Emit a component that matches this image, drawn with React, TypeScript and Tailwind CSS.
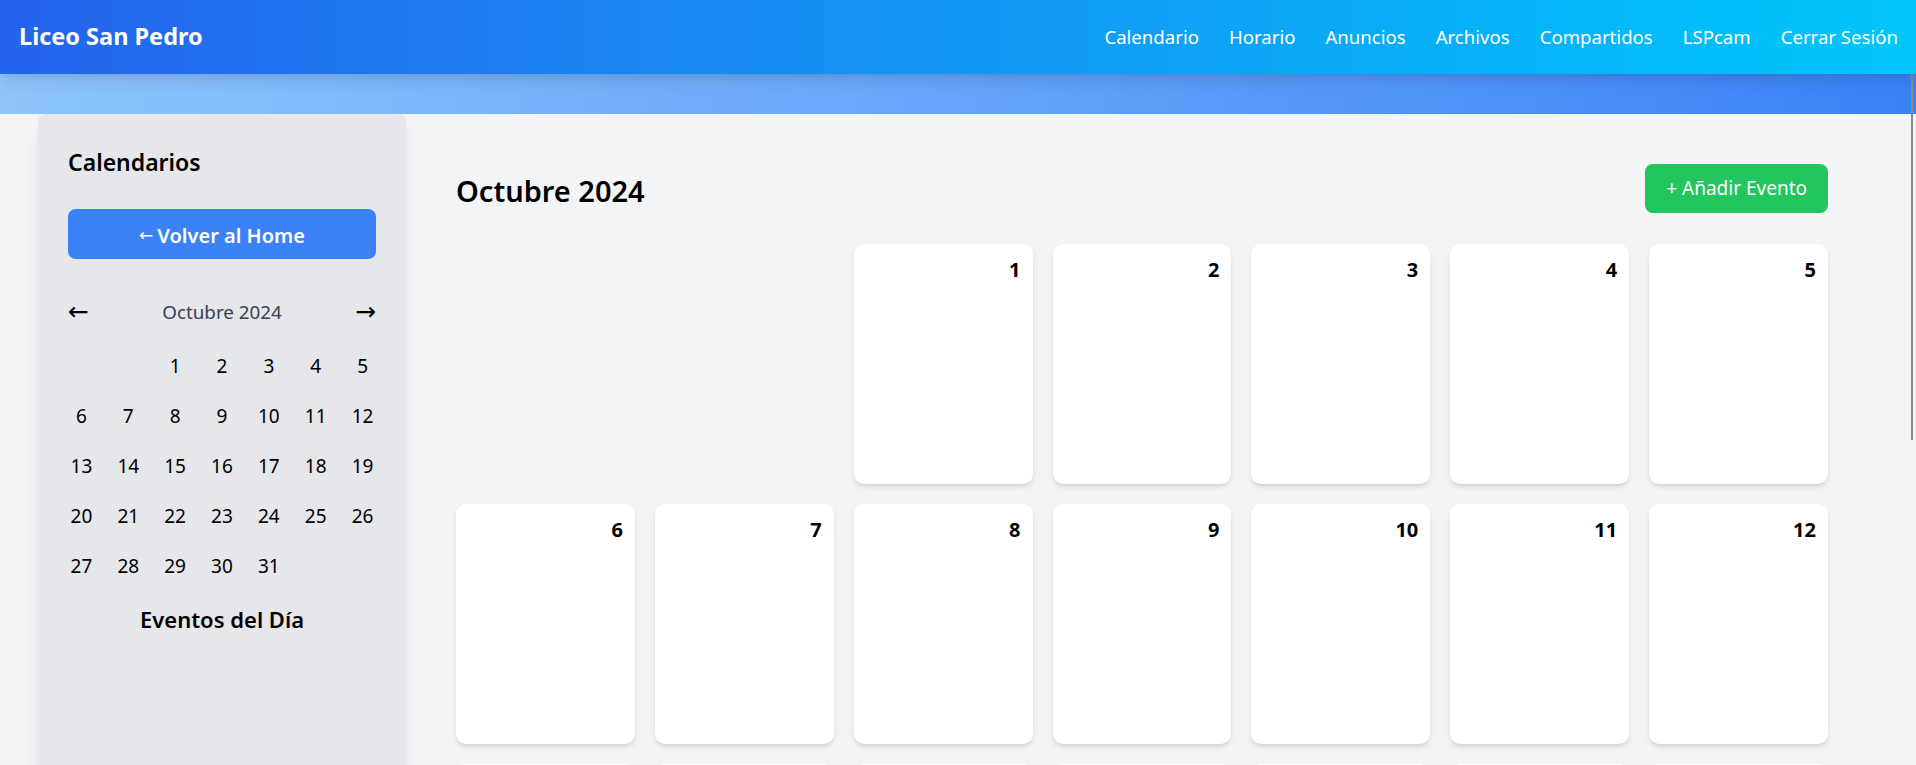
import { useState } from "react";

const navLinks = ["Calendario", "Horario", "Anuncios", "Archivos", "Compartidos", "LSPcam", "Cerrar Sesión"];

// Octubre 2024 empieza en martes (semana desde domingo)
const offset = 2;
const daysInMonth = 31;

const buildCells = () => {
  const cells: (number | null)[] = [];
  for (let i = 0; i < offset; i++) cells.push(null);
  for (let d = 1; d <= daysInMonth; d++) cells.push(d);
  return cells;
};

const Navbar = () => (
  <nav className="relative z-10 h-[74px] flex items-center justify-between pl-[19px] pr-[18px] bg-linear-to-r from-[#2563eb] to-[#00c6fb] shadow-lg">
    <span className="text-[23.5px] font-bold text-white">Liceo San Pedro</span>
    <ul className="flex items-center gap-[30px] text-[18.6px] text-white">
      {navLinks.map((link) => (
        <li key={link}>
          <a href="#" className="hover:underline">
            {link}
          </a>
        </li>
      ))}
    </ul>
  </nav>
);

const Sidebar = ({ cells }: { cells: (number | null)[] }) => (
  <aside className="w-[368px] shrink-0 bg-[#e5e7eb] rounded-lg shadow-lg px-[30px] pt-8 min-h-[720px]">
    <h2 className="text-[23px] leading-8 font-semibold text-black">Calendarios</h2>

    <button className="mt-[31px] w-full h-[50px] pt-[3px] rounded-lg bg-[#3b82f6] text-white text-xl font-semibold flex items-center justify-center gap-1">
      <span className="font-['DejaVu_Sans'] font-normal text-[17px]">←</span>
      Volver al Home
    </button>

    {/* Mini calendario */}
    <div className="mt-[39px] h-7 flex items-center justify-between">
      <button className="font-['DejaVu_Sans'] text-[25px] leading-7 text-black">←</button>
      <span className="text-[18.8px] text-gray-700">Octubre 2024</span>
      <button className="font-['DejaVu_Sans'] text-[25px] leading-7 text-black">→</button>
    </div>

    <div className="mt-[26px] grid grid-cols-7 gap-x-5 gap-y-[22px] text-center">
      {cells.map((day, i) => (
        <span key={i} className="h-7 text-[19px] leading-7 text-black">
          {day ?? ""}
        </span>
      ))}
    </div>

    <h3 className="mt-6 text-center text-[22px] leading-[30px] font-semibold text-black">Eventos del Día</h3>
  </aside>
);

const App = () => {
  const [cells] = useState(buildCells());

  return (
    <div className="relative h-screen overflow-hidden bg-[#f3f4f6] font-['Noto_Sans',sans-serif]">
      <Navbar />
      <div className="h-10 bg-linear-to-r from-[#8ec5fc] to-[#3b82f6]" />

      <div className="flex px-[38px]">
        <Sidebar cells={cells} />

        <main className="flex-1 p-[50px]">
          {/* Cabecera */}
          <div className="h-[49px] flex items-center justify-between mb-[31px]">
            <h1 className="pt-1 text-[29px] font-semibold text-black">Octubre 2024</h1>
            <button className="h-[49px] px-[21px] rounded-lg bg-[#22c55e] text-white text-[19px]">
              + Añadir Evento
            </button>
          </div>

          {/* Grilla del mes */}
          <div className="grid grid-cols-7 gap-5">
            {cells.map((day, i) =>
              day === null ? (
                <div key={i} />
              ) : (
                <div key={i} className="h-[240px] bg-white rounded-[10px] shadow-md p-3 text-right">
                  <span className="text-xl font-bold text-black">{day}</span>
                </div>
              )
            )}
          </div>
        </main>
      </div>

      {/* barra de scroll */}
      <div className="absolute right-[3px] top-[14px] w-[2px] h-[426px] bg-[#8a8a8a]" />
    </div>
  );
};

export default App;
